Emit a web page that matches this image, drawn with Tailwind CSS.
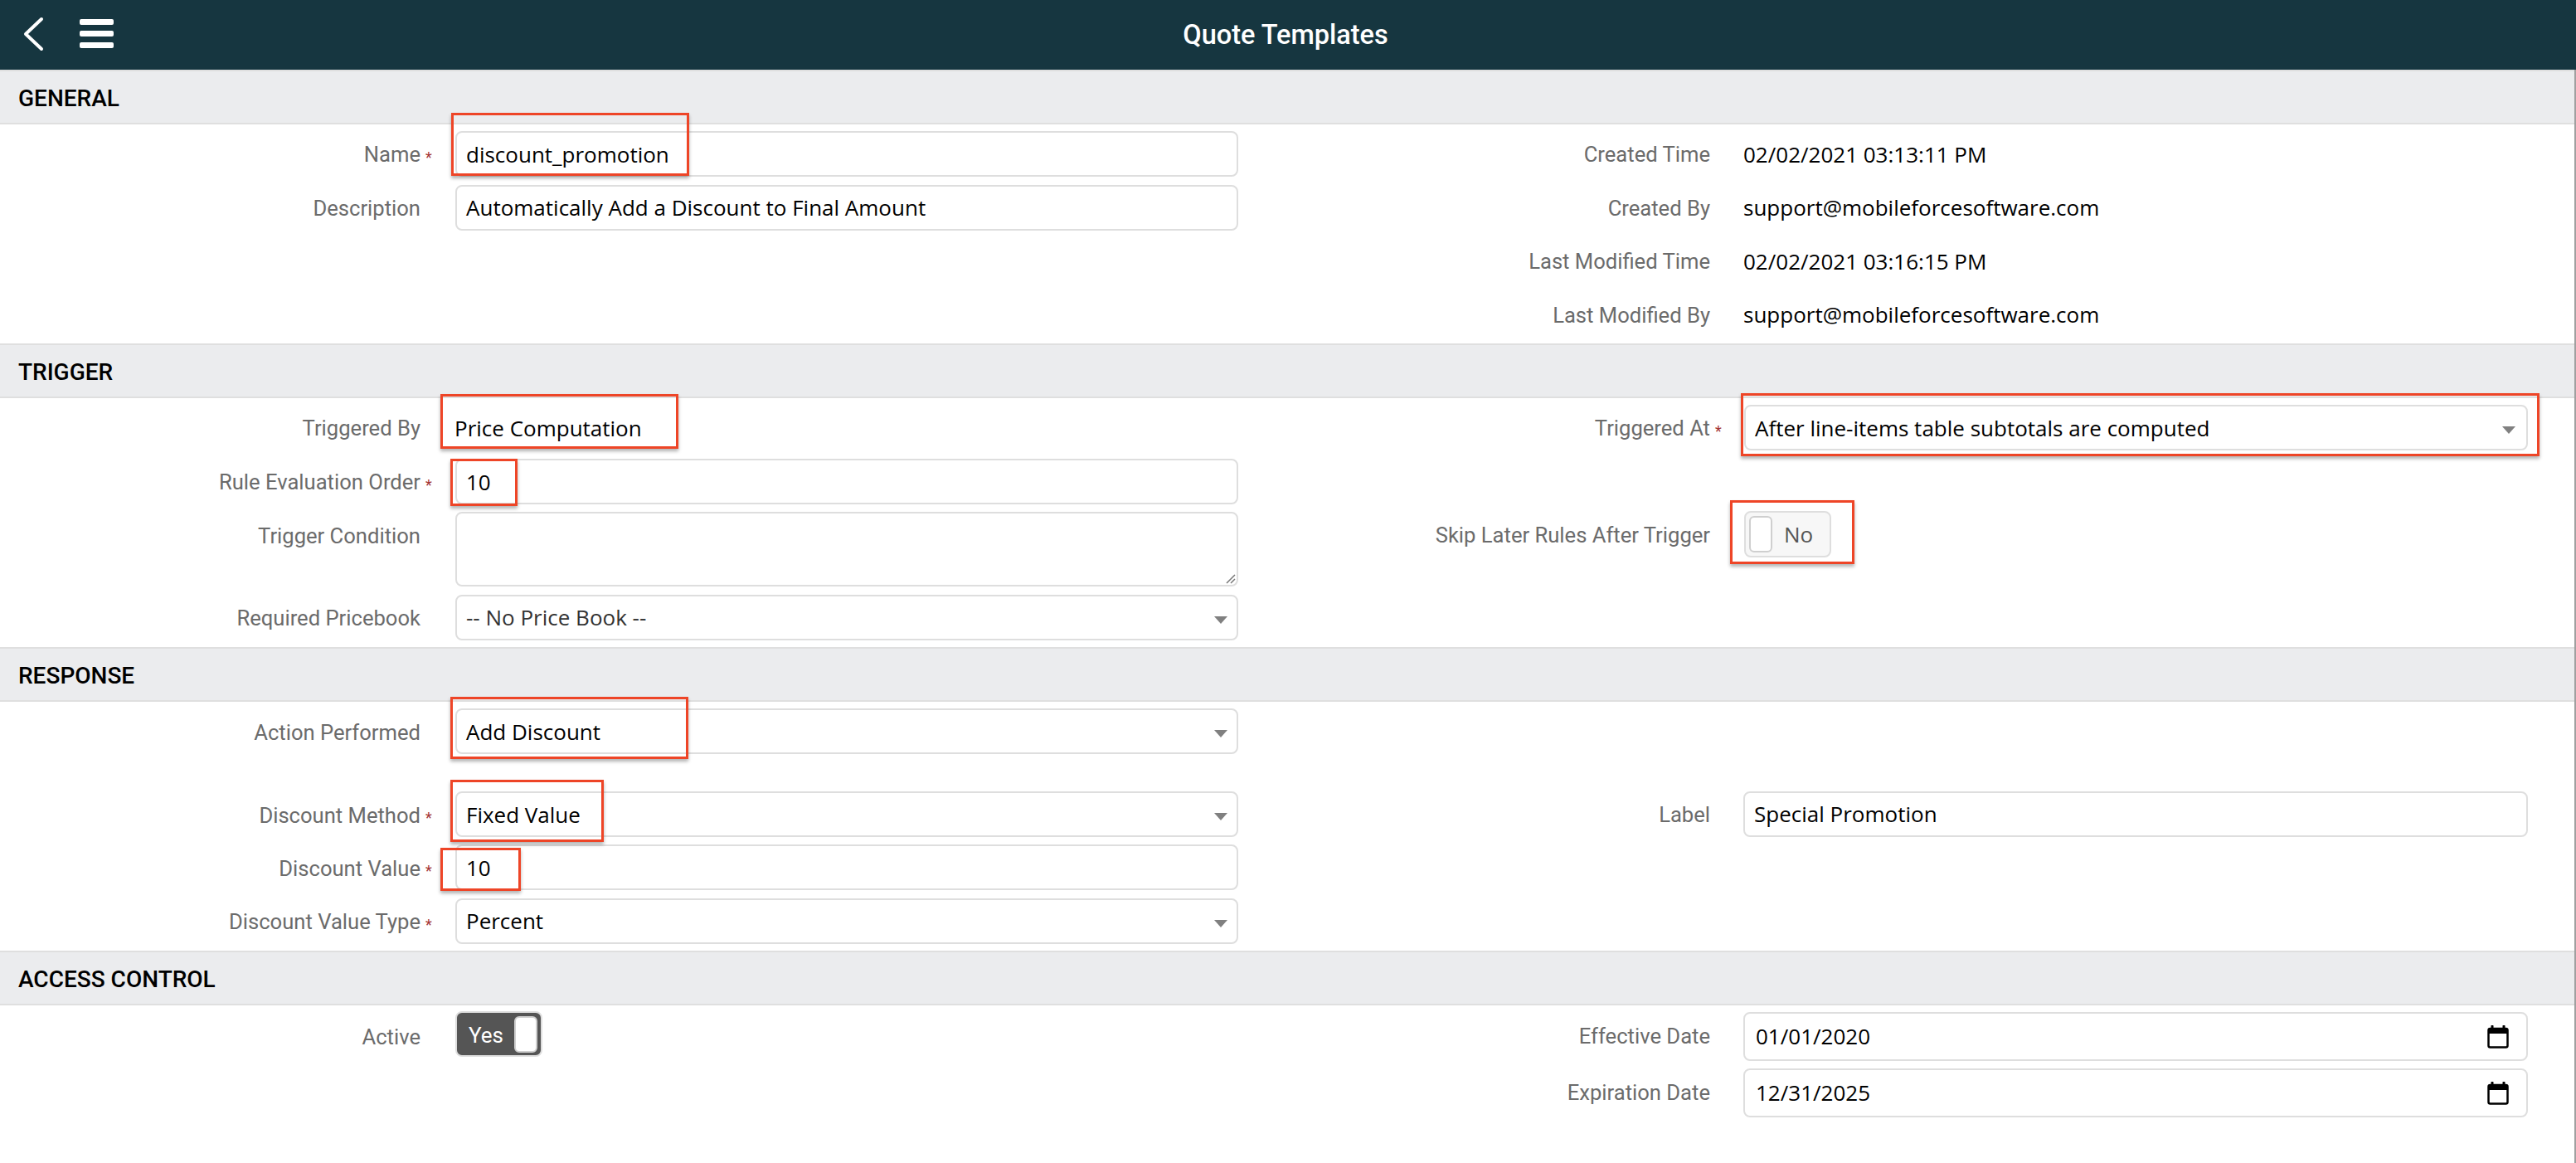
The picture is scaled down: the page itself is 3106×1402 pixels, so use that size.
<!DOCTYPE html>
<html lang="en">
<head>
<meta charset="utf-8">
<title>Quote Templates</title>
<script src="https://cdn.jsdelivr.net/npm/@tailwindcss/browser@4"></script>
</head>
<body class="bg-white">
<div class="relative w-[3106px] h-[1402px] overflow-hidden font-['Roboto',sans-serif]">
  <header class="relative h-[84px] bg-[#163640] flex items-center">
    <svg class="absolute left-[27px] top-[20px]" width="26" height="42" viewBox="0 0 26 42" fill="none"><path d="M23 3 L4 21 L23 39" stroke="#fff" stroke-width="4" stroke-linecap="round" stroke-linejoin="round"/></svg>
    <div class="absolute left-[96px] top-[23px] w-[41px] flex flex-col gap-[7px]">
      <div class="h-[7px] rounded-[2px] bg-white"></div>
      <div class="h-[7px] rounded-[2px] bg-white"></div>
      <div class="h-[7px] rounded-[2px] bg-white"></div>
    </div>
    <h1 class="w-full text-center text-white text-[32.5px] font-medium pr-[6px]">Quote Templates</h1>
  </header>
  <main class="border-r-2 border-[#a0a0a0] h-[1318px]">
    <section>
      <div class="h-[66px] bg-[#ebecee] border-y-2 border-[#dfdfdf] flex items-center pl-[22px] pt-[4px] text-[28px] font-medium text-black">GENERAL</div>
      <div class="h-[264px] flex pt-[8px] text-[25.6px]">
        <div class="w-[1553px] flex flex-col gap-[9.5px]">
          <div class="flex h-[55px] items-center"><div class="w-[507px] pt-[2px] text-right text-[#6b6b6b]">Name</div><div class="w-[42px] pl-[6px] pt-[8px] text-[#a33333] text-[18px]">*</div><div class="w-[944px] h-[55px] border-2 border-[#dedede] rounded-[8px] flex items-center pl-[11px] pt-[2px] font-['Open_Sans',sans-serif] text-[26px] text-black">discount_promotion</div></div>
          <div class="flex h-[55px] items-center"><div class="w-[507px] pt-[2px] text-right text-[#6b6b6b]">Description</div><div class="w-[42px]"></div><div class="w-[944px] h-[55px] border-2 border-[#dedede] rounded-[8px] flex items-center pl-[11px] font-['Open_Sans',sans-serif] text-[26px] text-black">Automatically Add a Discount to Final Amount</div></div>
        </div>
        <div class="flex-1 flex flex-col gap-[9.5px]">
          <div class="flex h-[55px] items-center"><div class="w-[509px] pt-[2px] text-right text-[#6b6b6b]">Created Time</div><div class="w-[40px]"></div><div class="pt-[2px] font-['Open_Sans',sans-serif] text-[26px] text-black">02/02/2021 03:13:11 PM</div></div>
          <div class="flex h-[55px] items-center"><div class="w-[509px] pt-[2px] text-right text-[#6b6b6b]">Created By</div><div class="w-[40px]"></div><div class="font-['Open_Sans',sans-serif] text-[26px] text-black">support@mobileforcesoftware.com</div></div>
          <div class="flex h-[55px] items-center"><div class="w-[509px] pt-[2px] text-right text-[#6b6b6b]">Last Modified Time</div><div class="w-[40px]"></div><div class="pt-[2px] font-['Open_Sans',sans-serif] text-[26px] text-black">02/02/2021 03:16:15 PM</div></div>
          <div class="flex h-[55px] items-center"><div class="w-[509px] pt-[2px] text-right text-[#6b6b6b]">Last Modified By</div><div class="w-[40px]"></div><div class="font-['Open_Sans',sans-serif] text-[26px] text-black">support@mobileforcesoftware.com</div></div>
        </div>
      </div>
    </section>
    <section>
      <div class="h-[66px] bg-[#ebecee] border-y-2 border-[#dfdfdf] flex items-center pl-[22px] pt-[4px] text-[28px] font-medium text-black">TRIGGER</div>
      <div class="h-[300px] flex pt-[8px] text-[25.6px]">
        <div class="w-[1553px] flex flex-col gap-[9.5px]">
          <div class="flex h-[55px] items-center"><div class="w-[507px] pt-[2px] text-right text-[#6b6b6b]">Triggered By</div><div class="w-[41px]"></div><div class="pt-[2px] font-['Open_Sans',sans-serif] text-[26px] text-black">Price Computation</div></div>
          <div class="flex h-[55px] items-center"><div class="w-[507px] pt-[2px] text-right text-[#6b6b6b]">Rule Evaluation Order</div><div class="w-[42px] pl-[6px] pt-[8px] text-[#a33333] text-[18px]">*</div><div class="w-[944px] h-[55px] border-2 border-[#dedede] rounded-[8px] flex items-center pl-[11px] pt-[2px] font-['Open_Sans',sans-serif] text-[26px] text-black">10</div></div>
          <div class="flex h-[90px]"><div class="w-[507px] pt-[10px] text-right text-[#6b6b6b]">Trigger Condition</div><div class="w-[42px]"></div><div class="relative w-[944px] h-[90px] border-2 border-[#dedede] rounded-[8px]"><svg class="absolute right-[1px] bottom-[1px]" width="14" height="14" viewBox="0 0 14 14" fill="none"><path d="M13 3 L3 13 M13 8 L8 13" stroke="#777" stroke-width="1.5"/></svg></div></div>
          <div class="flex h-[55px] items-center"><div class="w-[507px] pt-[2px] text-right text-[#6b6b6b]">Required Pricebook</div><div class="w-[42px]"></div><div class="relative w-[944px] h-[55px] border-2 border-[#dedede] rounded-[8px] flex items-center pl-[11px] font-['Open_Sans',sans-serif] text-[26px] text-[#333]">-- No Price Book --<div class="absolute right-[11px] top-[24px] w-0 h-0 border-x-[8px] border-x-transparent border-t-[9px] border-t-[#808080]"></div></div></div>
        </div>
        <div class="flex-1 flex flex-col gap-[9.5px]">
          <div class="flex h-[55px] items-center"><div class="w-[509px] pt-[2px] text-right text-[#6b6b6b]">Triggered At</div><div class="w-[41px] pl-[6px] pt-[8px] text-[#a33333] text-[18px]">*</div><div class="relative w-[945px] h-[55px] border-2 border-[#dedede] rounded-[8px] flex items-center pl-[11px] pt-[2px] font-['Open_Sans',sans-serif] text-[26px] text-black">After line-items table subtotals are computed<div class="absolute right-[13px] top-[24px] w-0 h-0 border-x-[8px] border-x-transparent border-t-[9px] border-t-[#808080]"></div></div></div>
          <div class="flex h-[55px] items-center mt-[64px]"><div class="w-[509px] pt-[2px] text-right text-[#6b6b6b]">Skip Later Rules After Trigger</div><div class="w-[41px]"></div><div class="w-[105px] h-[56px] bg-[#f7f7f7] border-2 border-[#dedede] rounded-[8px] flex items-center pl-[4px]"><div class="w-[28px] h-[44px] bg-white border-2 border-[#cfcfcf] rounded-[6px]"></div><div class="ml-[14px] font-['Open_Sans',sans-serif] text-[26px] text-[#555]">No</div></div></div>
        </div>
      </div>
    </section>
    <section>
      <div class="h-[66px] bg-[#ebecee] border-y-2 border-[#dfdfdf] flex items-center pl-[22px] pt-[4px] text-[28px] font-medium text-black">RESPONSE</div>
      <div class="h-[300px] flex pt-[8px] text-[25.6px]">
        <div class="w-[1553px] flex flex-col">
          <div class="flex h-[55px] items-center"><div class="w-[507px] pt-[4px] text-right text-[#6b6b6b]">Action Performed</div><div class="w-[42px]"></div><div class="relative w-[944px] h-[55px] border-2 border-[#dedede] rounded-[8px] flex items-center pl-[11px] pt-[2px] font-['Open_Sans',sans-serif] text-[26px] text-black">Add Discount<div class="absolute right-[11px] top-[24px] w-0 h-0 border-x-[8px] border-x-transparent border-t-[9px] border-t-[#808080]"></div></div></div>
          <div class="flex h-[55px] items-center mt-[45px]"><div class="w-[507px] pt-[4px] text-right text-[#6b6b6b]">Discount Method</div><div class="w-[42px] pl-[6px] pt-[8px] text-[#a33333] text-[18px]">*</div><div class="relative w-[944px] h-[55px] border-2 border-[#dedede] rounded-[8px] flex items-center pl-[11px] pt-[2px] font-['Open_Sans',sans-serif] text-[26px] text-black">Fixed Value<div class="absolute right-[11px] top-[24px] w-0 h-0 border-x-[8px] border-x-transparent border-t-[9px] border-t-[#808080]"></div></div></div>
          <div class="flex h-[55px] items-center mt-[9px]"><div class="w-[507px] pt-[4px] text-right text-[#6b6b6b]">Discount Value</div><div class="w-[42px] pl-[6px] pt-[8px] text-[#a33333] text-[18px]">*</div><div class="w-[944px] h-[55px] border-2 border-[#dedede] rounded-[8px] flex items-center pl-[11px] pt-[2px] font-['Open_Sans',sans-serif] text-[26px] text-black">10</div></div>
          <div class="flex h-[55px] items-center mt-[10px]"><div class="w-[507px] pt-[2px] text-right text-[#6b6b6b]">Discount Value Type</div><div class="w-[42px] pl-[6px] pt-[8px] text-[#a33333] text-[18px]">*</div><div class="relative w-[944px] h-[55px] border-2 border-[#dedede] rounded-[8px] flex items-center pl-[11px] font-['Open_Sans',sans-serif] text-[26px] text-black">Percent<div class="absolute right-[11px] top-[24px] w-0 h-0 border-x-[8px] border-x-transparent border-t-[9px] border-t-[#808080]"></div></div></div>
        </div>
        <div class="flex-1 flex flex-col">
          <div class="flex h-[55px] items-center mt-[100px]"><div class="w-[509px] pt-[2px] text-right text-[#6b6b6b]">Label</div><div class="w-[40px]"></div><div class="w-[946px] h-[55px] border-2 border-[#dedede] rounded-[8px] flex items-center pl-[11px] font-['Open_Sans',sans-serif] text-[26px] text-black">Special Promotion</div></div>
        </div>
      </div>
    </section>
    <section>
      <div class="h-[66px] bg-[#ebecee] border-y-2 border-[#dfdfdf] flex items-center pl-[22px] pt-[4px] text-[28px] font-medium text-black">ACCESS CONTROL</div>
      <div class="flex pt-[8px] text-[25.6px]">
        <div class="w-[1553px] flex flex-col">
          <div class="flex h-[59px] items-center"><div class="w-[507px] pt-[2px] text-right text-[#6b6b6b]">Active</div><div class="w-[42px]"></div><div class="w-[105px] h-[55px] bg-[#555555] border-2 border-[#dedede] rounded-[8px] flex items-center justify-between pl-[14px] pr-[4px] -mt-[6px]"><div class="text-white text-[26px] pt-[4px]">Yes</div><div class="w-[28px] h-[44px] bg-white border-2 border-[#cfcfcf] rounded-[6px]"></div></div></div>
        </div>
        <div class="flex-1 flex flex-col gap-[9px]">
          <div class="flex h-[59px] items-center"><div class="w-[509px] text-right text-[#6b6b6b]">Effective Date</div><div class="w-[40px]"></div><div class="w-[946px] h-[59px] border-2 border-[#dedede] rounded-[8px] flex items-center justify-between pl-[13px] pr-[21px] font-['Open_Sans',sans-serif] text-[26px] text-black">01/01/2020<svg width="26" height="28" viewBox="0 0 26 28" fill="none"><path d="M6 1v4M20 1v4" stroke="#000" stroke-width="3" stroke-linecap="round"/><rect x="1.5" y="4" width="23" height="22.5" rx="2" stroke="#000" stroke-width="2.5"/><rect x="1.5" y="4" width="23" height="6" fill="#000"/></svg></div></div>
          <div class="flex h-[59px] items-center"><div class="w-[509px] text-right text-[#6b6b6b]">Expiration Date</div><div class="w-[40px]"></div><div class="w-[946px] h-[59px] border-2 border-[#dedede] rounded-[8px] flex items-center justify-between pl-[13px] pr-[21px] font-['Open_Sans',sans-serif] text-[26px] text-black">12/31/2025<svg width="26" height="28" viewBox="0 0 26 28" fill="none"><path d="M6 1v4M20 1v4" stroke="#000" stroke-width="3" stroke-linecap="round"/><rect x="1.5" y="4" width="23" height="22.5" rx="2" stroke="#000" stroke-width="2.5"/><rect x="1.5" y="4" width="23" height="6" fill="#000"/></svg></div></div>
        </div>
      </div>
    </section>
  </main>
  <div class="absolute left-[544px] top-[136px] w-[287px] h-[76px] border-[3px] border-[#ee4527] shadow-[0_3px_4px_rgba(0,0,0,0.3)]"></div>
  <div class="absolute left-[531px] top-[475px] w-[287px] h-[66px] border-[3px] border-[#ee4527] shadow-[0_3px_4px_rgba(0,0,0,0.3)]"></div>
  <div class="absolute left-[543px] top-[553px] w-[81px] h-[57px] border-[3px] border-[#ee4527] shadow-[0_3px_4px_rgba(0,0,0,0.3)]"></div>
  <div class="absolute left-[2099px] top-[474px] w-[963px] h-[76px] border-[3px] border-[#ee4527] shadow-[0_3px_4px_rgba(0,0,0,0.3)]"></div>
  <div class="absolute left-[2086px] top-[603px] w-[150px] h-[77px] border-[3px] border-[#ee4527] shadow-[0_3px_4px_rgba(0,0,0,0.3)]"></div>
  <div class="absolute left-[543px] top-[840px] w-[287px] h-[75px] border-[3px] border-[#ee4527] shadow-[0_3px_4px_rgba(0,0,0,0.3)]"></div>
  <div class="absolute left-[543px] top-[940px] w-[185px] h-[75px] border-[3px] border-[#ee4527] shadow-[0_3px_4px_rgba(0,0,0,0.3)]"></div>
  <div class="absolute left-[531px] top-[1022px] w-[97px] h-[52px] border-[3px] border-[#ee4527] shadow-[0_3px_4px_rgba(0,0,0,0.3)]"></div>
</div>
</body>
</html>
